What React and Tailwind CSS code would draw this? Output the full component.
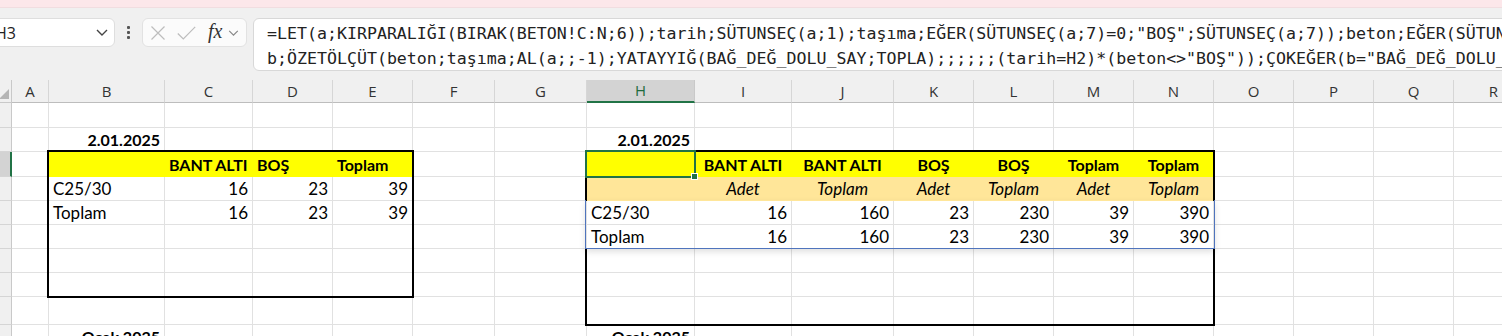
import React from "react";

const COLS = [
  { k: "A", w: 37, cls: "w-[37px]" },
  { k: "B", w: 116, cls: "w-[116px]" },
  { k: "C", w: 88, cls: "w-[88px]" },
  { k: "D", w: 80, cls: "w-[80px]" },
  { k: "E", w: 80, cls: "w-[80px]" },
  { k: "F", w: 82, cls: "w-[82px]" },
  { k: "G", w: 92, cls: "w-[92px]" },
  { k: "H", w: 108, cls: "w-[108px]" },
  { k: "I", w: 97, cls: "w-[97px]" },
  { k: "J", w: 102, cls: "w-[102px]" },
  { k: "K", w: 80, cls: "w-[80px]" },
  { k: "L", w: 80, cls: "w-[80px]" },
  { k: "M", w: 80, cls: "w-[80px]" },
  { k: "N", w: 80, cls: "w-[80px]" },
  { k: "O", w: 80, cls: "w-[80px]" },
  { k: "P", w: 80, cls: "w-[80px]" },
  { k: "Q", w: 80, cls: "w-[80px]" },
  { k: "R", w: 80, cls: "w-[80px]" },
];

const ROWS = [
  { n: 1, h: 25, cls: "h-[25px]" },
  { n: 2, h: 24, cls: "h-[24px]" },
  { n: 3, h: 25, cls: "h-[25px]" },
  { n: 4, h: 24, cls: "h-[24px]" },
  { n: 5, h: 24, cls: "h-[24px]" },
  { n: 6, h: 24, cls: "h-[24px]" },
  { n: 7, h: 24, cls: "h-[24px]" },
  { n: 8, h: 24, cls: "h-[24px]" },
  { n: 9, h: 28, cls: "h-[28px]" },
  { n: 10, h: 24, cls: "h-[24px]" },
];

const YEL = "bg-[#ffff00] border-[#ffff00]";
const ORG = "bg-[#ffe699] border-[#ffe699]";

// cell contents: t = text, a = align, b = bold, i = italic, f = fill
const DATA = {
  B2: { t: "2.01.2025", a: "r", b: true },
  H2: { t: "2.01.2025", a: "r", b: true },

  B3: { f: YEL },
  C3: { t: "BANT ALTI", b: true, f: YEL },
  D3: { t: "BOŞ", b: true, f: YEL },
  E3: { t: "Toplam", b: true, f: YEL },
  B4: { t: "C25/30" },
  C4: { t: "16", a: "r" },
  D4: { t: "23", a: "r" },
  E4: { t: "39", a: "r" },
  B5: { t: "Toplam" },
  C5: { t: "16", a: "r" },
  D5: { t: "23", a: "r" },
  E5: { t: "39", a: "r" },

  H3: { f: YEL },
  I3: { t: "BANT ALTI", a: "c", b: true, f: YEL },
  J3: { t: "BANT ALTI", a: "c", b: true, f: YEL },
  K3: { t: "BOŞ", a: "c", b: true, f: YEL },
  L3: { t: "BOŞ", a: "c", b: true, f: YEL },
  M3: { t: "Toplam", a: "c", b: true, f: YEL },
  N3: { t: "Toplam", a: "c", b: true, f: YEL },
  H4: { f: ORG },
  I4: { t: "Adet", a: "c", i: true, f: ORG },
  J4: { t: "Toplam", a: "c", i: true, f: ORG },
  K4: { t: "Adet", a: "c", i: true, f: ORG },
  L4: { t: "Toplam", a: "c", i: true, f: ORG },
  M4: { t: "Adet", a: "c", i: true, f: ORG },
  N4: { t: "Toplam", a: "c", i: true, f: ORG },
  H5: { t: "C25/30" },
  I5: { t: "16", a: "r" },
  J5: { t: "160", a: "r" },
  K5: { t: "23", a: "r" },
  L5: { t: "230", a: "r" },
  M5: { t: "39", a: "r" },
  N5: { t: "390", a: "r" },
  H6: { t: "Toplam" },
  I6: { t: "16", a: "r" },
  J6: { t: "160", a: "r" },
  K6: { t: "23", a: "r" },
  L6: { t: "230", a: "r" },
  M6: { t: "39", a: "r" },
  N6: { t: "390", a: "r" },

  B10: { t: "Ocak 2025", a: "r", b: true },
  H10: { t: "Ocak 2025", a: "r", b: true },
};

const LINE1 =
  '=LET(a;KIRPARALIĞI(BIRAK(BETON!C:N;6));tarih;SÜTUNSEÇ(a;1);taşıma;EĞER(SÜTUNSEÇ(a;7)=0;"BOŞ";SÜTUNSEÇ(a;7));beton;EĞER(SÜTUNSEÇ(a;7)=0;"BOŞ"';
const LINE2 =
  'b;ÖZETÖLÇÜT(beton;taşıma;AL(a;;-1);YATAYYIĞ(BAĞ_DEĞ_DOLU_SAY;TOPLA);;;;;;(tarih=H2)*(beton<>"BOŞ"));ÇOKEĞER(b="BAĞ_DEĞ_DOLU_SAY";"Adet"';

// pixel positions of gridlines, used for the drawn borders that sit on top of the cells
const colX = {};
{
  let x = 12;
  COLS.forEach((c) => {
    colX[c.k] = x;
    x += c.w;
  });
}
const rowY = {};
{
  let y = 23;
  ROWS.forEach((r) => {
    rowY[r.n] = y;
    y += r.h;
  });
}

function box(c1, r1, c2, r2) {
  return {
    left: colX[c1] - 2,
    top: rowY[r1] - 2,
    width: colX[c2] - colX[c1] + 3,
    height: rowY[r2] - rowY[r1] + 3,
  };
}

function Chevron({ className }) {
  return (
    <svg className={className} viewBox="0 0 12 7" fill="none">
      <path d="M1 1l5 5 5-5" stroke="currentColor" strokeWidth="1.4" />
    </svg>
  );
}

function FormulaBar() {
  return (
    <div className="h-[72px] bg-[#f0f0f0] flex items-start pt-[10px] [font-family:'Open_Sans',sans-serif]">
      {/* Name box */}
      <div className="ml-[-10px] w-[125px] h-[29px] shrink-0 bg-white rounded-[6px] border border-[#dedede] flex items-center pl-[4px] pr-[6px]">
        <span className="text-[16px] text-[#222] flex-1">H3</span>
        <Chevron className="w-[12px] h-[7px] text-[#444]" />
      </div>
      {/* dots */}
      <div className="w-[27px] h-[29px] shrink-0 flex flex-col items-center justify-center gap-[2px]">
        <span className="w-[3px] h-[3px] bg-[#555] rounded-[1px]" />
        <span className="w-[3px] h-[3px] bg-[#555] rounded-[1px]" />
        <span className="w-[3px] h-[3px] bg-[#555] rounded-[1px]" />
      </div>
      {/* cancel / enter / fx */}
      <div className="w-[105px] h-[29px] shrink-0 bg-[#fbfbfb] rounded-[6px] border border-[#e2e2e2] flex items-center pl-[7px]">
        <svg className="w-[16px] h-[14px] text-[#bdbdbd]" viewBox="0 0 16 14" fill="none">
          <path d="M1.5 0.5l13 13M14.5 0.5l-13 13" stroke="currentColor" strokeWidth="1.2" />
        </svg>
        <svg className="w-[19px] h-[14px] ml-[11px] text-[#bdbdbd]" viewBox="0 0 19 14" fill="none">
          <path d="M0.8 7.5l5.5 5.5L18.2 0.8" stroke="currentColor" strokeWidth="1.2" />
        </svg>
        <span className="ml-[12px] text-[20px] leading-none italic text-[#333] [font-family:'Liberation_Serif',serif] mt-[-3px]">
          fx
        </span>
        <Chevron className="w-[11px] h-[6px] ml-[6px] text-[#888]" />
      </div>
      {/* Formula */}
      <div className="ml-[6px] w-[1300px] h-[53px] shrink-0 bg-white rounded-[6px] border border-[#d8d8d8] pl-[13px] pt-[2px] overflow-hidden [font-family:'DejaVu_Sans_Mono',monospace] text-[16.6px] leading-[25px] text-[#222]">
        <div className="whitespace-nowrap">{LINE1}</div>
        <div className="whitespace-nowrap">{LINE2}</div>
      </div>
    </div>
  );
}

function ColHeaders() {
  return (
    <div className="flex h-[23px] bg-[#f0f0f0] [font-family:'Open_Sans',sans-serif] text-[15px] text-[#333]">
      <div className="w-[12px] shrink-0 border-r border-b border-[#c9c9c9] relative overflow-hidden">
        <svg className="absolute right-[2px] bottom-[3px] w-[10px] h-[10px]" viewBox="0 0 10 10">
          <path d="M10 0V10H0z" fill="#b5b5b5" />
        </svg>
      </div>
      {COLS.map((c) =>
        c.k === "H" ? (
          <div
            key={c.k}
            className={`${c.cls} shrink-0 flex items-center justify-center bg-[#d3d3d3] text-[#1e6b3e] border-r border-[#c9c9c9] border-b-2 border-b-[#217346]`}
          >
            {c.k}
          </div>
        ) : (
          <div
            key={c.k}
            className={`${c.cls} shrink-0 flex items-center justify-center border-r border-b border-r-[#d6d6d6] border-b-[#bdbdbd]`}
          >
            {c.k}
          </div>
        )
      )}
    </div>
  );
}

function Cell({ col, row }) {
  const d = DATA[col.k + row.n] || {};
  const align = d.a === "r" ? "justify-end" : d.a === "c" ? "justify-center" : "justify-start";
  return (
    <div
      className={`${col.cls} ${row.cls} shrink-0 flex items-center px-[4px] pt-[1px] whitespace-nowrap border-r border-b ${
        d.f ? d.f : "border-[#e1e1e1]"
      } ${align} ${d.b ? "font-bold text-[16px]" : "text-[17px]"} ${d.i ? "italic" : ""}`}
    >
      {d.t}
    </div>
  );
}

export default function App() {
  return (
    <div className="w-[1502px] h-[336px] overflow-hidden bg-white">
      <div className="h-[8px] bg-[#fce7ea] border-b border-[#f1dde0]" />
      <FormulaBar />
      <div className="relative">
        <ColHeaders />
        <div className="[font-family:'Lato',sans-serif] text-black">
          {ROWS.map((r) => (
            <div key={r.n} className="flex">
              <div
                className={`w-[12px] ${r.cls} shrink-0 overflow-hidden flex items-center border-b border-[#d5d5d5] [font-family:'Open_Sans',sans-serif] text-[14px] text-[#333] ${
                  r.n === 3 ? "bg-[#d3d3d3] border-r-2 border-r-[#217346]" : "bg-[#f0f0f0] border-r border-r-[#c9c9c9]"
                }`}
              >
                <span className="w-[36px] ml-[-26px] shrink-0 text-center">{r.n}</span>
              </div>
              {COLS.map((c) => (
                <Cell key={c.k} col={c} row={r} />
              ))}
            </div>
          ))}
        </div>

        {/* left table frame */}
        <div className="absolute pointer-events-none border-2 border-black" style={box("B", 3, "F", 9)} />

        {/* right table frame, split around the spill range */}
        <div
          className="absolute pointer-events-none border-2 border-b-0 border-black"
          style={{ ...box("H", 3, "O", 5), height: rowY[5] - rowY[3] + 2 }}
        />
        <div
          className="absolute pointer-events-none border-2 border-t-0 border-black"
          style={{ ...box("H", 7, "O", 10), top: rowY[7] - 1, height: rowY[10] - rowY[7] + 2 }}
        />
        <div
          className="absolute pointer-events-none border border-t-0 border-[#4f74bd] shadow-[0_3px_6px_rgba(0,0,0,0.12)]"
          style={{ left: colX.H - 2, top: rowY[5] - 1, width: colX.O - colX.H + 3, height: rowY[7] - rowY[5] + 1 }}
        />

        {/* active cell H3 */}
        <div
          className="absolute pointer-events-none border-2 border-[#217346]"
          style={{ left: colX.H - 2, top: rowY[3] - 2, width: colX.I - colX.H + 3, height: rowY[4] - rowY[3] + 3 }}
        />
        <div
          className="absolute pointer-events-none w-[7px] h-[7px] bg-[#217346] border border-white"
          style={{ left: colX.I - 4, top: rowY[4] - 4 }}
        />
      </div>
    </div>
  );
}
